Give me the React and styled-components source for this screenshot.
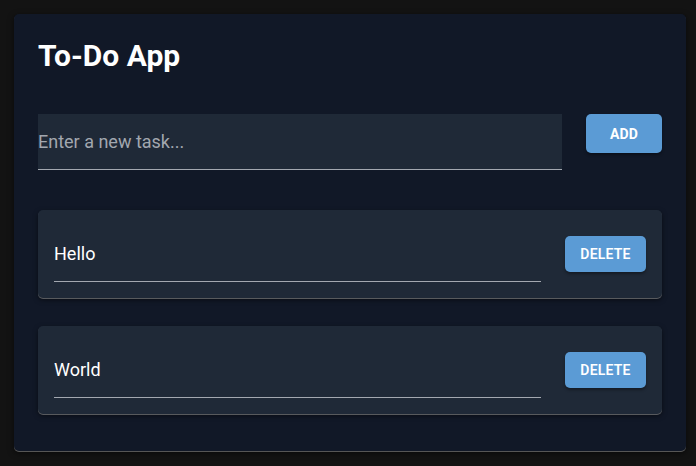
import React, { useState } from "react";
import styled, { createGlobalStyle } from "styled-components";

const GlobalStyle = createGlobalStyle`
  html, body {
    margin: 0;
    padding: 0;
    background: #131313;
    font-family: Roboto, "Liberation Sans", Arial, sans-serif;
  }
  * { box-sizing: border-box; }
`;

const Page = styled.div`
  padding: 14px 10px 14px 14px;
`;

const Card = styled.div`
  width: 672px;
  background: #111827;
  border-radius: 5px;
  padding: 24px 24px 37px 24px;
  box-shadow: 0 1px 0 rgba(150, 150, 150, 0.55), 0 2px 6px rgba(0, 0, 0, 0.6);
`;

const Title = styled.h1`
  margin: 0;
  font-size: 30px;
  line-height: 36px;
  font-weight: 700;
  color: #ffffff;
`;

const AddRow = styled.div`
  display: flex;
  align-items: flex-start;
  gap: 24px;
  margin-top: 40px;
`;

const FilledField = styled.div`
  flex: 1;
  height: 56px;
  background: #1f2937;
  border-bottom: 1px solid #a3a8b0;
  display: flex;
  align-items: center;
`;

const TextInput = styled.input`
  width: 100%;
  background: transparent;
  border: none;
  outline: none;
  padding: 0;
  font-family: Roboto, "Liberation Sans", Arial, sans-serif;
  font-size: 18px;
  color: #ffffff;
  &::placeholder {
    color: #a2a7af;
    opacity: 1;
  }
`;

const Button = styled.button`
  flex: none;
  width: ${(p) => p.$width}px;
  height: ${(p) => p.$height}px;
  border: none;
  border-radius: 5px;
  background: #5b9bd5;
  color: #ffffff;
  font-family: Roboto, "Liberation Sans", Arial, sans-serif;
  font-size: ${(p) => p.$size}px;
  font-weight: ${(p) => p.$weight};
  letter-spacing: 0.2px;
  text-transform: uppercase;
  cursor: pointer;
  box-shadow: 0 2px 3px rgba(0, 0, 0, 0.35);
`;

const List = styled.div`
  display: flex;
  flex-direction: column;
  gap: 28px;
  margin-top: 40px;
`;

const Item = styled.div`
  height: 88px;
  background: #1f2937;
  border-radius: 5px;
  padding: 16px;
  display: flex;
  align-items: center;
  gap: 24px;
  box-shadow: 0 1px 0 rgba(140, 140, 140, 0.6), 0 2px 5px rgba(0, 0, 0, 0.5);
`;

const StandardField = styled.div`
  flex: 1;
  height: 56px;
  border-bottom: 1px solid #a3a8b0;
  display: flex;
  align-items: center;
`;

export default function App() {
  const [task, setTask] = useState("");
  const [items, setItems] = useState(["Hello", "World"]);

  return (
    <>
      <GlobalStyle />
      <Page>
        <Card>
          <Title>To-Do App</Title>
          <AddRow>
            <FilledField>
              <TextInput
                placeholder="Enter a new task..."
                value={task}
                onChange={(e) => setTask(e.target.value)}
              />
            </FilledField>
            <Button
              $width={76}
              $height={39}
              $size={14}
              $weight={700}
              onClick={() => {
                if (task.trim()) {
                  setItems([...items, task.trim()]);
                  setTask("");
                }
              }}
            >
              Add
            </Button>
          </AddRow>
          <List>
            {items.map((it, i) => (
              <Item key={i}>
                <StandardField>
                  <TextInput
                    value={it}
                    onChange={(e) =>
                      setItems(items.map((x, j) => (j === i ? e.target.value : x)))
                    }
                  />
                </StandardField>
                <Button
                  $width={81}
                  $height={36}
                  $size={14}
                  $weight={600}
                  onClick={() => setItems(items.filter((_, j) => j !== i))}
                >
                  Delete
                </Button>
              </Item>
            ))}
          </List>
        </Card>
      </Page>
    </>
  );
}
